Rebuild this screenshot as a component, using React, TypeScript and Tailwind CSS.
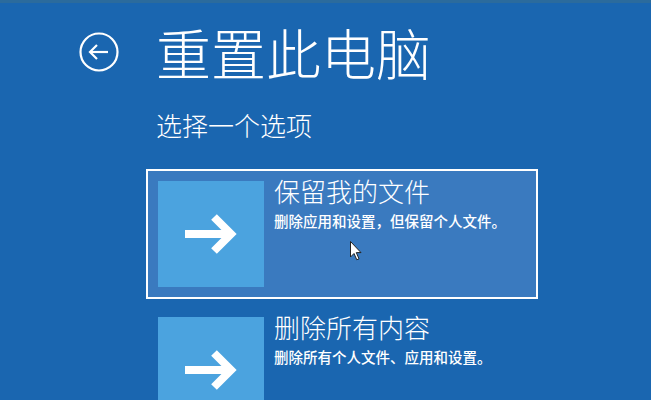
const font = { fontFamily: '"Noto Sans CJK SC", "Noto Sans", sans-serif' };

function Arrow() {
  return (
    <svg width="52" height="42" viewBox="0 0 52 42" fill="none">
      <path d="M0 21 H46" stroke="white" strokeWidth="8" />
      <path d="M29 4 L46 21 L29 38" stroke="white" strokeWidth="8" strokeLinejoin="miter" />
    </svg>
  );
}

type Option = { title: string; desc: string; active?: boolean };

const options: Option[] = [
  { title: "保留我的文件", desc: "删除应用和设置，但保留个人文件。", active: true },
  { title: "删除所有内容", desc: "删除所有个人文件、应用和设置。" },
];

function OptionCard({ title, desc, active }: Option) {
  return (
    <div
      className={
        "w-[392px] h-[130px] shrink-0 border-2 p-[10px] flex " +
        (active ? "border-white bg-[#3a7abf]" : "border-transparent")
      }
    >
      <div className="w-[106px] h-[106px] shrink-0 bg-[#4ba3df] flex items-center justify-center">
        <Arrow />
      </div>
      <div className="pl-[10px] -mt-[3px] text-white">
        <div className="text-[26px] leading-none font-light">{title}</div>
        <div className="mt-[10px] text-[14.5px] leading-none font-medium">{desc}</div>
      </div>
    </div>
  );
}

export default function App() {
  return (
    <div className="relative w-[651px] h-[400px] overflow-hidden bg-[#1a66b0] text-white" style={font}>
      <div className="h-[3px] bg-[#2b6b9d]" />

      <div className="pt-[21px] pl-[79px] flex items-center">
        <svg width="40" height="40" viewBox="0 0 40 40" fill="none" stroke="white" strokeWidth="2.2">
          <circle cx="20" cy="20" r="18.5" />
          <path d="M11 20 H29" />
          <path d="M18 13 L11 20 L18 27" strokeLinejoin="miter" />
        </svg>
        <h1 className="ml-[37px] text-[55px] leading-none font-light">重置此电脑</h1>
      </div>

      <div className="mt-[33px] pl-[156px] text-[26px] leading-none font-light">选择一个选项</div>

      <div className="mt-[31px] pl-[146px] flex flex-col gap-[6px]">
        {options.map((o) => (
          <OptionCard key={o.title} {...o} />
        ))}
      </div>

      <svg className="absolute left-[350px] top-[241px]" width="12" height="20" viewBox="0 0 12 20">
        <path d="M0.5 0.5 L0.5 16 L4 12.5 L6.8 18.8 L9 17.8 L6.3 11.6 L11 11.6 Z" fill="white" stroke="#222" strokeWidth="1" strokeLinejoin="round" />
      </svg>
    </div>
  );
}
